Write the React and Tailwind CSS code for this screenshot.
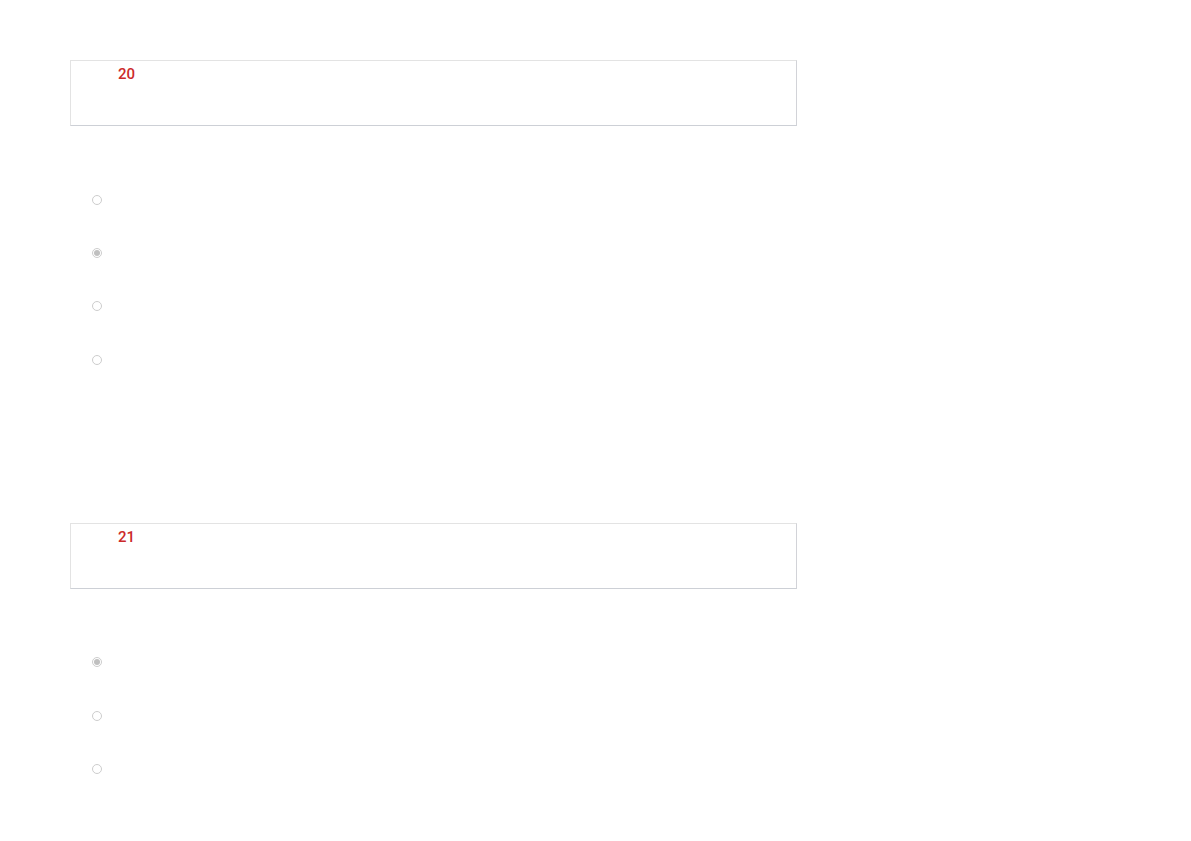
const questions = [
  { number: '20', options: 4, selected: 1 },
  { number: '21', options: 3, selected: 0 },
]

function Radio({ checked }) {
  return (
    <span className="flex items-center justify-center w-[10px] h-[10px] rounded-full border border-[#cdcdcd] bg-white">
      {checked && <span className="w-[6px] h-[6px] rounded-full bg-[#c0c0c0]" />}
    </span>
  )
}

function Question({ q }) {
  return (
    <section className="mb-[136.5px]">
      {/* Question header */}
      <div className="h-[66px] border border-[#e3e3e3] border-r-[#d2d3d8] border-b-[#cdd0d6] bg-white pt-[1px] pl-[47px]">
        <span className="text-[15px] leading-5 font-medium text-[#cc2a2a]">{q.number}</span>
      </div>

      {/* Answer options */}
      <ul className="mt-[47px]">
        {Array.from({ length: q.options }).map((_, i) => (
          <li key={i} className="h-[53.34px] flex items-center pl-[22px]">
            <Radio checked={i === q.selected} />
          </li>
        ))}
      </ul>
    </section>
  )
}

export default function App() {
  return (
    <div className="min-h-screen bg-white font-['Roboto',sans-serif]">
      <div className="pt-[60px] pl-[70px] w-[797px]">
        {questions.map(q => (
          <Question key={q.number} q={q} />
        ))}
      </div>
    </div>
  )
}
